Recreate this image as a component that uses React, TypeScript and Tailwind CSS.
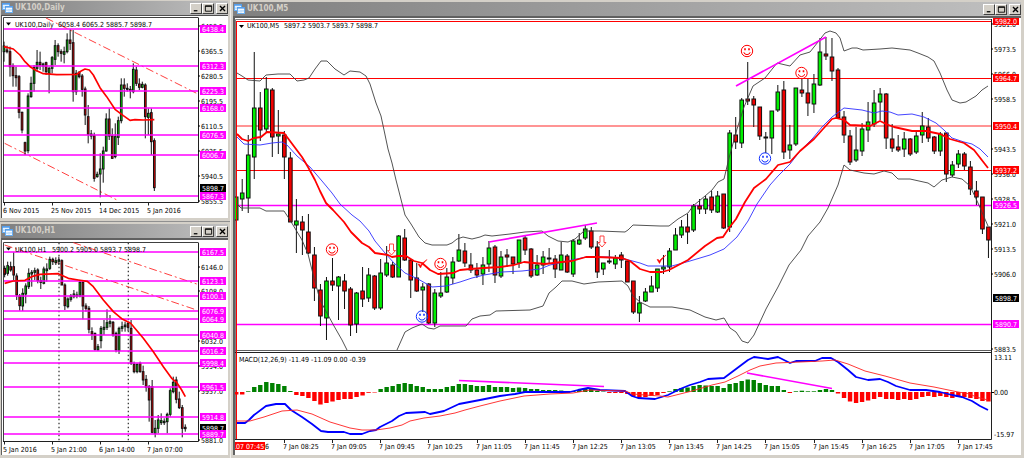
import { ReactNode } from "react";

type Candle = [high: number, top: number, bottom: number, low: number, side: "g" | "r"];
type Level = [value: string, y: number, line?: string];
type Point = [x: number, y: number];

const MAGENTA = "#ff00ff";
const RED = "#ff0000";
const PALE_RED = "#ff9494";

const CHART_FONT = "font-['DejaVu_Sans_Condensed','DejaVu_Sans',sans-serif] text-[7px]";

// [high, body top, body bottom, low, side]
const M5_CANDLES: Candle[] = [
  [197, 197, 220, 220, "g"], [179, 193, 199, 211, "g"], [135, 155, 198, 213, "g"], [52, 108, 157, 179, "g"],
  [92, 108, 130, 141, "r"], [77, 89, 129, 132, "g"], [88, 90, 137, 157, "r"], [110, 134, 136, 154, "g"],
  [131, 135, 157, 179, "r"], [152, 158, 222, 222, "r"], [199, 221, 225, 253, "g"], [216, 222, 230, 255, "r"],
  [214, 232, 253, 254, "r"], [247, 255, 288, 301, "r"], [284, 290, 316, 326, "r"], [277, 281, 318, 340, "g"],
  [258, 281, 285, 291, "r"], [276, 277, 286, 320, "g"], [274, 281, 291, 309, "r"], [287, 289, 325, 336, "r"],
  [292, 293, 324, 333, "g"], [267, 291, 299, 307, "r"], [268, 275, 298, 302, "g"], [275, 276, 308, 310, "r"],
  [259, 273, 308, 310, "g"], [246, 263, 275, 277, "g"], [262, 265, 277, 278, "r"], [235, 236, 277, 277, "g"],
  [229, 238, 260, 261, "r"], [259, 260, 280, 298, "r"], [263, 278, 291, 292, "r"], [283, 287, 290, 312, "g"],
  [283, 284, 323, 324, "r"], [289, 293, 323, 327, "g"], [272, 293, 296, 298, "g"], [268, 277, 292, 293, "g"],
  [257, 262, 278, 284, "g"], [234, 250, 261, 262, "g"], [243, 251, 263, 267, "r"], [253, 265, 270, 273, "r"],
  [263, 270, 275, 278, "r"], [257, 265, 274, 285, "g"], [241, 248, 264, 272, "g"], [245, 247, 275, 283, "r"],
  [251, 257, 276, 278, "g"], [249, 255, 257, 267, "r"], [257, 257, 264, 274, "r"], [240, 240, 263, 268, "g"],
  [236, 238, 250, 255, "r"], [248, 249, 276, 278, "r"], [255, 265, 275, 276, "g"], [251, 257, 265, 274, "g"],
  [248, 258, 259, 263, "g"], [255, 259, 269, 278, "r"], [242, 255, 270, 270, "g"], [254, 256, 272, 273, "r"],
  [239, 241, 274, 277, "g"], [233, 240, 244, 245, "g"], [225, 229, 238, 240, "g"], [227, 231, 247, 249, "r"],
  [241, 247, 272, 278, "r"], [263, 263, 269, 275, "g"], [250, 261, 262, 264, "g"], [255, 258, 264, 269, "g"],
  [252, 255, 260, 268, "r"], [261, 261, 282, 282, "r"], [281, 281, 312, 314, "r"], [296, 303, 313, 322, "g"],
  [288, 292, 301, 302, "g"], [276, 286, 292, 292, "g"], [269, 269, 288, 292, "g"], [255, 267, 269, 274, "g"],
  [248, 251, 267, 272, "g"], [228, 235, 250, 250, "g"], [220, 227, 235, 238, "g"], [214, 227, 232, 244, "r"],
  [204, 206, 230, 232, "g"], [199, 206, 209, 214, "r"], [196, 199, 209, 214, "g"], [191, 197, 210, 213, "r"],
  [191, 196, 212, 213, "g"], [194, 194, 228, 229, "r"], [130, 133, 227, 232, "g"], [117, 135, 142, 149, "r"],
  [98, 100, 143, 148, "g"], [62, 99, 101, 105, "r"], [96, 99, 105, 127, "r"], [107, 107, 136, 140, "r"],
  [132, 137, 138, 153, "g"], [111, 111, 138, 154, "g"], [85, 92, 110, 112, "g"], [81, 90, 152, 159, "r"],
  [125, 145, 150, 159, "g"], [88, 88, 144, 146, "g"], [79, 90, 93, 97, "r"], [79, 93, 103, 116, "r"],
  [74, 84, 104, 113, "g"], [38, 52, 85, 86, "g"], [37, 54, 56, 60, "r"], [38, 57, 71, 81, "r"],
  [68, 70, 118, 119, "r"], [111, 117, 135, 143, "r"], [130, 136, 162, 165, "r"], [127, 150, 160, 162, "g"],
  [123, 129, 151, 156, "g"], [102, 122, 130, 142, "g"], [90, 103, 124, 127, "g"], [88, 94, 102, 120, "g"],
  [93, 94, 138, 149, "r"], [124, 139, 148, 152, "r"], [135, 147, 150, 152, "r"], [132, 139, 149, 157, "g"],
  [138, 139, 154, 156, "r"], [130, 136, 152, 154, "g"], [112, 126, 135, 143, "g"], [118, 127, 138, 142, "r"],
  [136, 137, 151, 154, "r"], [132, 134, 151, 156, "g"], [133, 133, 174, 182, "r"], [161, 165, 175, 177, "g"],
  [150, 154, 164, 168, "g"], [152, 154, 166, 170, "r"], [161, 167, 189, 195, "r"], [181, 191, 197, 205, "r"],
  [197, 197, 229, 234, "r"], [227, 227, 240, 258, "r"],
];

const M5_UPPER: Point[] = [
  [237, 73], [242, 76], [248, 80], [260, 81], [266, 75], [278, 74], [290, 74], [297, 81], [304, 80], [309, 78],
  [315, 69], [321, 61], [327, 61], [335, 69], [344, 75], [350, 71], [360, 72], [366, 76], [370, 84], [376, 103],
  [381, 116], [384, 130], [388, 149], [392, 163], [396, 180], [405, 215], [411, 224], [419, 237], [425, 243],
  [432, 245], [447, 245], [452, 243], [457, 239], [463, 237], [472, 239], [480, 237], [485, 235], [492, 236],
  [510, 234], [525, 232], [542, 231], [548, 236], [558, 241], [568, 242], [575, 239], [584, 231], [600, 231],
  [625, 232], [628, 230], [633, 225], [660, 226], [669, 226], [678, 219], [688, 213], [693, 206], [705, 196],
  [712, 190], [718, 182], [724, 179], [729, 158], [737, 129], [744, 107], [753, 86], [765, 78], [777, 63],
  [790, 66], [800, 55], [810, 52], [818, 42], [825, 33], [830, 31], [836, 33], [840, 38], [844, 51], [852, 48],
  [857, 48], [863, 50], [880, 49], [892, 48], [910, 50], [918, 53], [928, 57], [934, 61], [940, 73], [947, 90],
  [952, 100], [960, 103], [966, 102], [976, 96], [982, 90], [988, 86],
];

const M5_LOWER: Point[] = [
  [236, 203], [241, 208], [260, 208], [266, 211], [284, 211], [290, 220], [296, 230], [302, 240], [308, 254],
  [314, 278], [320, 300], [328, 315], [334, 326], [342, 340], [347, 350],
];

const M5_LOWER_TAIL: Point[] = [
  [397, 350], [405, 332], [412, 328], [422, 324], [428, 328], [434, 329], [440, 326], [466, 326], [472, 319],
  [480, 316], [490, 315], [496, 311], [530, 310], [543, 306], [549, 293], [556, 287], [562, 281], [572, 281],
  [584, 284], [598, 282], [622, 281], [628, 286], [633, 296], [640, 302], [650, 307], [672, 307], [690, 310],
  [705, 317], [716, 320], [724, 318], [730, 328], [736, 332], [742, 341], [748, 343], [754, 335], [766, 309],
  [778, 287], [789, 265], [801, 250], [808, 236], [820, 222], [828, 208], [838, 185], [844, 165], [850, 170],
  [864, 173], [874, 174], [884, 171], [892, 173], [898, 179], [910, 179], [928, 183], [934, 187], [942, 180],
  [952, 177], [962, 179], [970, 186], [978, 203], [988, 226],
];

const M5_FAST: Point[] = [
  [237, 134], [242, 139], [248, 141], [254, 138], [261, 137], [267, 132], [284, 133], [290, 141], [302, 157],
  [308, 167], [315, 180], [320, 191], [326, 203], [333, 210], [344, 222], [351, 232], [362, 243], [369, 247],
  [375, 253], [388, 255], [392, 257], [398, 256], [406, 256], [414, 261], [422, 263], [430, 270], [438, 274],
  [453, 273], [460, 270], [470, 269], [484, 268], [500, 267], [514, 265], [524, 262], [534, 263], [545, 264],
  [562, 262], [572, 261], [586, 257], [597, 257], [622, 258], [630, 261], [640, 269], [650, 272], [662, 272],
  [669, 270], [688, 260], [705, 246], [717, 238], [723, 237], [729, 228], [736, 219], [745, 202], [754, 188],
  [766, 179], [778, 165], [790, 162], [800, 151], [814, 139], [832, 119], [836, 118], [844, 120], [850, 125],
  [870, 126], [880, 121], [886, 124], [894, 127], [912, 131], [926, 131], [940, 134], [950, 139], [964, 143],
  [974, 150], [988, 168],
];

const M5_SLOW: Point[] = [
  [237, 137], [244, 144], [260, 145], [272, 143], [282, 142], [287, 145], [297, 156], [310, 167], [322, 181],
  [332, 193], [340, 204], [352, 215], [360, 221], [369, 231], [375, 241], [385, 253], [394, 263], [405, 273],
  [418, 279], [432, 287], [446, 286], [460, 282], [472, 278], [484, 275], [502, 272], [522, 271], [540, 269],
  [550, 265], [572, 260], [586, 257], [610, 257], [625, 259], [640, 263], [648, 266], [672, 266], [690, 261],
  [710, 255], [724, 249], [737, 237], [748, 221], [757, 204], [770, 185], [778, 176], [790, 164], [800, 151],
  [813, 138], [822, 127], [832, 117], [844, 108], [862, 110], [874, 113], [882, 111], [890, 112], [898, 115],
  [912, 114], [924, 117], [936, 123], [944, 130], [952, 138], [964, 142], [972, 144], [980, 149], [988, 157],
];

const M5_TICKS: Level[] = [
  ["5981.0", 24], ["5973.5", 49], ["5966.0", 74], ["5958.5", 99], ["5943.5", 149], ["5936.0", 174],
  ["5928.5", 199], ["5921.0", 224], ["5913.5", 249], ["5906.0", 274], ["5883.5", 349],
];

const M5_LEVELS: Level[] = [
  ["5982.0", 21, RED], ["5964.7", 78, RED], ["5950.4", 126, PALE_RED], ["5937.2", 170, RED],
  ["5926.5", 205, MAGENTA], ["5890.7", 324, MAGENTA],
];

const M5_TIMES = [
  "08:25", "09:05", "09:45", "10:25", "11:05", "11:45", "12:25", "13:05",
  "13:45", "14:25", "15:05", "15:45", "16:25", "17:05", "17:45",
];

const MACD_BARS = [
  -2.5, -2.5, 0.7, 5, 7, 10, 9, 8, 6, 1, -3, -4, -6, -9, -12.5, -11, -9.5, -8, -7, -7, -5, -3.5, -0.8, -0.5, 3,
  5, 6, 8, 9, 8, 6, 5, 3, 3, 3, 5, 6, 8, 8, 7, 6, 6, 7, 5, 5, 5, 4, 4.5, 4, 3, 3, 2, 2, 2, 1.5, 1, 1, 2, 4, 3,
  1, 0.5, -1, -1, -1, -2, -4, -5.5, -5, -4, -3, -1, 0.7, 3, 4, 4.5, 6, 7, 6.5, 6, 6, 4, 8, 9, 11, 12.5, 12, 9,
  7, 6, 6, 2, -1, 0.7, 1.3, 0.7, 0.7, 2, 3, 2, -1.5, -6, -9.5, -11, -10, -8.5, -7, -5, -7, -7, -8, -7, -8, -7,
  -5, -4, -5, -4, -5, -6, -5, -5, -6, -7, -9, -9.5,
];

const MACD_MAIN: Point[] = [
  [236, 423], [245, 423], [249, 420], [254, 415], [266, 406], [276, 404], [285, 404], [291, 410], [302, 417],
  [312, 424], [321, 431], [328, 432], [344, 432], [350, 434], [362, 434], [370, 431], [376, 430], [380, 427],
  [392, 421], [399, 416], [406, 413], [425, 412], [430, 414], [444, 411], [459, 404], [480, 400], [500, 396],
  [515, 394], [525, 392], [540, 392], [570, 392], [578, 390], [588, 388], [600, 390], [625, 391], [632, 396],
  [638, 398], [655, 399], [668, 395], [672, 393], [680, 389], [690, 385], [700, 382], [708, 379], [724, 378],
  [732, 372], [740, 366], [748, 360], [754, 357], [768, 359], [778, 357], [784, 360], [790, 363], [796, 361],
  [815, 361], [822, 358], [831, 358], [838, 362], [848, 370], [856, 377], [868, 380], [880, 379], [888, 382],
  [896, 386], [910, 390], [926, 390], [940, 392], [952, 395], [962, 397], [972, 401], [980, 406], [988, 410],
];

const MACD_SIGNAL: Point[] = [
  [236, 421], [250, 421], [264, 417], [282, 411], [297, 410], [312, 414], [330, 422], [350, 428], [362, 430],
  [376, 430], [390, 428], [402, 425], [410, 421], [424, 418], [440, 416], [455, 413], [465, 410], [480, 406],
  [500, 401], [524, 396], [550, 394], [573, 393], [590, 390], [625, 391], [633, 394], [645, 395], [660, 396],
  [668, 397], [680, 394], [692, 391], [702, 388], [712, 385], [725, 382], [738, 376], [750, 370], [760, 366],
  [776, 363], [800, 362], [822, 361], [835, 360], [848, 364], [865, 371], [885, 376], [910, 383], [934, 387],
  [958, 392], [970, 394], [976, 397], [988, 400],
];

// the two small charts keep their series in thirds of a pixel
const DAILY_CANDLES: Candle[] = [
  [125, 138, 155, 185, "g"], [137, 150, 155, 160, "r"], [140, 155, 200, 230, "r"], [190, 198, 227, 260, "r"],
  [200, 227, 233, 260, "r"], [225, 230, 337, 355, "r"], [335, 337, 390, 400, "r"], [425, 428, 453, 465, "r"],
  [280, 288, 452, 460, "g"], [230, 250, 290, 293, "g"], [195, 203, 250, 275, "g"], [150, 187, 205, 215, "g"],
  [155, 187, 195, 210, "r"], [188, 192, 198, 215, "g"], [185, 188, 215, 225, "r"], [200, 205, 220, 280, "g"],
  [168, 173, 205, 220, "g"], [120, 137, 178, 195, "g"], [130, 137, 155, 170, "r"], [148, 155, 160, 185, "r"],
  [140, 155, 163, 190, "g"], [100, 120, 155, 160, "g"], [88, 120, 130, 150, "r"], [90, 128, 275, 305, "r"],
  [210, 220, 275, 285, "g"], [213, 217, 230, 235, "r"], [222, 228, 268, 290, "r"], [260, 267, 345, 375, "r"],
  [315, 350, 403, 430, "r"], [390, 402, 408, 418, "r"], [398, 407, 535, 545, "r"], [515, 523, 530, 533, "g"],
  [460, 507, 522, 592, "g"], [440, 453, 507, 548, "g"], [340, 357, 453, 455, "g"], [325, 357, 408, 420, "r"],
  [385, 408, 475, 477, "r"], [370, 410, 470, 475, "g"], [350, 362, 412, 435, "g"], [235, 255, 362, 370, "g"],
  [235, 255, 265, 290, "r"], [250, 265, 268, 275, "g"], [258, 268, 272, 295, "r"], [190, 208, 275, 280, "g"],
  [200, 210, 250, 258, "r"], [235, 252, 262, 270, "r"], [245, 253, 262, 265, "g"], [250, 255, 350, 415, "r"],
  [325, 340, 352, 405, "g"], [325, 338, 425, 465, "r"], [415, 422, 563, 573, "r"],
];

const DAILY_AVERAGE: Point[] = [
  [12, 140], [40, 147], [60, 165], [75, 185], [90, 200], [110, 212], [130, 221], [170, 224], [230, 223],
  [242, 214], [255, 207], [268, 210], [280, 225], [300, 263], [320, 290], [345, 328], [370, 347], [390, 361],
  [405, 359], [430, 360], [463, 359],
];

const DAILY_TICKS: Level[] = [
  ["6450.5", 79], ["6365.5", 154], ["6280.5", 229], ["6195.5", 303], ["6110.5", 378], ["6025.5", 452],
  ["5940.5", 527], ["5855.5", 602],
];

const DAILY_LEVELS: Level[] = [
  ["6438.4", 88], ["6312.3", 198], ["6225.3", 274], ["6168.0", 324], ["6076.5", 405], ["6006.7", 466],
  ["5867.3", 588],
];

const H1_CANDLES: Candle[] = [
  [137, 145, 163, 172, "r"], [125, 137, 160, 167, "g"], [125, 140, 150, 155, "r"], [97, 140, 165, 180, "r"],
  [160, 168, 225, 240, "r"], [222, 228, 257, 272, "r"], [205, 220, 258, 273, "g"], [190, 198, 222, 250, "g"],
  [145, 160, 200, 207, "g"], [150, 157, 162, 200, "g"], [143, 152, 157, 180, "g"], [145, 150, 182, 190, "r"],
  [170, 182, 187, 207, "r"], [140, 147, 190, 193, "g"], [130, 147, 152, 185, "g"], [110, 118, 145, 150, "g"],
  [113, 118, 125, 135, "r"], [112, 122, 128, 135, "g"], [110, 120, 124, 135, "g"], [118, 122, 195, 195, "r"],
  [190, 195, 257, 270, "r"], [232, 237, 260, 265, "g"], [222, 228, 238, 245, "g"], [210, 222, 230, 235, "g"],
  [215, 225, 228, 235, "g"], [180, 187, 228, 232, "g"], [180, 187, 258, 298, "r"], [250, 258, 265, 275, "r"],
  [258, 265, 328, 340, "r"], [322, 335, 343, 360, "r"], [338, 340, 388, 392, "r"], [372, 380, 390, 392, "g"],
  [318, 325, 362, 385, "g"], [300, 322, 328, 345, "g"], [268, 308, 322, 330, "g"], [285, 305, 310, 322, "g"],
  [303, 307, 345, 350, "r"], [335, 340, 390, 397, "r"], [320, 325, 392, 402, "g"], [305, 320, 325, 335, "g"],
  [305, 315, 320, 335, "g"], [305, 310, 322, 333, "r"], [300, 325, 430, 435, "r"], [425, 432, 455, 460, "r"],
  [430, 433, 455, 460, "g"], [425, 430, 455, 458, "r"], [437, 455, 480, 495, "r"], [465, 478, 502, 515, "r"],
  [495, 500, 540, 605, "r"], [480, 500, 637, 640, "r"], [600, 625, 640, 652, "g"], [585, 600, 625, 640, "g"],
  [580, 602, 608, 615, "g"], [595, 604, 608, 615, "g"], [578, 583, 605, 640, "g"], [505, 512, 583, 590, "g"],
  [470, 487, 515, 520, "g"], [470, 480, 538, 550, "r"], [515, 537, 563, 567, "r"], [555, 563, 625, 652, "r"],
  [613, 622, 626, 635, "r"],
];

const H1_AVERAGE: Point[] = [
  [14, 190], [40, 183], [75, 181], [95, 170], [120, 163], [175, 161], [205, 175], [235, 180], [262, 184],
  [280, 200], [310, 240], [340, 275], [365, 296], [392, 310], [430, 355], [460, 395], [490, 440], [515, 475],
  [530, 487], [545, 510], [556, 530],
];

const H1_TICKS: Level[] = [
  ["6146.0", 140], ["6108.0", 213], ["6032.0", 363], ["5994.0", 438], ["5957.0", 512], ["5881.0", 660],
];

const H1_LEVELS: Level[] = [
  ["6167.5", 96], ["6123.1", 184], ["6100.1", 229], ["6076.9", 273], ["6064.9", 298], ["6040.8", 346],
  ["6016.2", 393], ["5998.4", 430], ["5961.5", 502], ["5914.8", 592], ["5889.7", 641],
];

const m5x = (index: number) => 236.2 + index * 6.018

const toPoints = (points: Point[]) => points.map(p => p.join(",")).join(" ")

const Line = ({ points, color, width = 1 }: { points: Point[]; color: string; width?: number }) => (
  <polyline points={toPoints(points)} fill="none" stroke={color} strokeWidth={width} strokeLinejoin="round" />
)

const Candles = ({ data, x, size, weight }: {
  data: Candle[];
  x: (index: number) => number;
  size: number;
  weight: number;
}) => (
  <g stroke="#101010" strokeWidth={weight}>
    {data.map(([high, top, bottom, low, side], i) => (
      <g key={i}>
        <line x1={x(i)} x2={x(i)} y1={high} y2={low} />
        <rect
          x={x(i) - size / 2}
          y={top}
          width={size}
          height={Math.max(bottom - top, weight / 2)}
          fill={side === "g" ? "#00f000" : "#f00000"}
        />
      </g>
    ))}
  </g>
)

const PriceTag = ({ x, y, value, color }: { x: number; y: number; value: string; color: string }) => (
  <g>
    <rect x={x} y={y - 4} width="26" height="8" fill={color} />
    <text x={x + 2} y={y + 3} fill="#fff">{value}</text>
  </g>
)

const PriceTick = ({ x, y, value }: { x: number; y: number; value: string }) => (
  <g>
    <path d={`M${x - 2} ${y}h2`} stroke="#000" />
    <text x={x + 1} y={y + 3}>{value}</text>
  </g>
)

const Smile = ({ x, y, color }: { x: number; y: number; color: string }) => (
  <g transform={`translate(${x} ${y})`} fill="none" stroke={color}>
    <circle r="5.7" />
    <path d="M-3.2 1.2Q-2.6 3.6 0 3.6T3.2 1.2" />
    <path d="M-2 -2.8v2M2 -2.8v2" strokeWidth="1.6" />
  </g>
)

const ArrowDown = ({ x, y }: { x: number; y: number }) => (
  <path
    d="M-2 -5.5H2V1H4L0 5.5L-4 1H-2Z"
    transform={`translate(${x} ${y})`}
    fill="#fff"
    stroke="#ff3030"
    strokeWidth="0.9"
  />
)

const Check = ({ x, y }: { x: number; y: number }) => (
  <path
    d="M-4 0L-1.5 4L0 1L5 -4.5L0 -0.6L-1.8 1.6L-2.6 0Z"
    transform={`translate(${x} ${y})`}
    fill={RED}
    stroke={RED}
    strokeWidth="0.5"
  />
)

const Caret = ({ x, y }: { x: number; y: number }) => <path d={`M${x} ${y}h5l-2.5 3z`} fill="#000" />

const ChartIcon = () => (
  <svg viewBox="0 0 11 10" className="w-[11px] h-[10px] shrink-0" aria-hidden="true">
    <rect x="0.5" y="0.5" width="7" height="6" fill="#e4f2ff" stroke="#6aaef0" />
    <path d="M0 1h8" stroke="#4a96e8" strokeWidth="1.4" />
    <path d="M2 5V3.4M4 4.6V3" stroke="#7ab8f4" strokeWidth="0.8" />
    <rect x="3.5" y="3.5" width="7" height="6" fill="#f4faff" stroke="#6aaef0" />
    <path d="M3 4h8" stroke="#4a96e8" strokeWidth="1.2" />
    <path d="M5 8V6.4M7 8.4V6M9 7.8V6" stroke="#7ab8f4" strokeWidth="0.8" />
  </svg>
)

const CAPTION_ICONS: Record<string, ReactNode> = {
  Minimize: <path d="M2 7.5h4" stroke="#000" strokeWidth="1.4" />,
  Maximize: <path d="M1.5 2H8.5V8H1.5ZM1.5 2.6h7" fill="none" stroke="#000" />,
  Close: <path d="M2.2 2.2l5.6 5.6M7.8 2.2L2.2 7.8" stroke="#000" strokeWidth="1.5" />,
}

const CaptionButton = ({ name }: { name: string }) => (
  <button
    type="button"
    aria-label={name}
    className="flex h-[11px] w-[12px] items-center justify-center border border-t-white border-l-white border-r-[#404040] border-b-[#404040] bg-[#d4d0c8]"
  >
    <svg viewBox="0 0 10 10" className="size-[9px] shrink-0">{CAPTION_ICONS[name]}</svg>
  </button>
)

const ChartWindow = ({ title, children }: { title: string; children: ReactNode }) => (
  <>
    <header className="flex h-[14px] items-center bg-linear-to-r from-[#808080] to-[#c0c0c0] pl-px">
      <ChartIcon />
      <h2 className="flex-1 pl-[2px] font-['DejaVu_Sans_Condensed','DejaVu_Sans',sans-serif] text-[8px] leading-[12px] font-bold text-[#d4d0c8]">
        {title}
      </h2>
      <CaptionButton name="Minimize" />
      <CaptionButton name="Maximize" />
      <div className="pl-[2px]">
        <CaptionButton name="Close" />
      </div>
    </header>
    {children}
  </>
)

const SmallChart = ({ top, bottom, frame, levels, ticks, last, candles, pitch, average, dashes, header, times, separators = [] }: {
  top: number;
  bottom: number;
  frame: [top: number, bottom: number];
  levels: Level[];
  ticks: Level[];
  last: number;
  candles: Candle[];
  pitch: [start: number, step: number];
  average: Point[];
  dashes: string;
  header: [symbol: string, prices: string, pricesX: number];
  times: string[];
  separators?: number[];
}) => {
  const base = top < 200 ? 0 : 220
  const y = (value: number) => Math.round(base + value / 3)
  const [frameTop, frameBottom] = frame

  return (
    <svg viewBox={`2 ${top} 226 ${bottom - top}`} className={`block h-auto w-full bg-white ${CHART_FONT}`}>
      <path d={`M3.5 ${frameBottom}V${frameTop}H198`} fill="none" stroke="#404040" />
      <g transform={`translate(0 ${base}) scale(0.33333)`}>
        {separators.map(x => (
          <path key={x} d={`M${x} 68V665`} stroke="#404040" strokeWidth="4" strokeDasharray="5 7" />
        ))}
        <path d={dashes} fill="none" stroke="#ff2020" strokeWidth="2.6" strokeDasharray="24 9 6 9" />
        <Candles data={candles} x={i => pitch[0] + i * pitch[1]} size={5} weight={3} />
      </g>
      {levels.map(([value, at]) => (
        <path key={value} d={`M4 ${y(at)}H198`} stroke={MAGENTA} strokeWidth="1.6" />
      ))}
      <g transform={`translate(0 ${base}) scale(0.33333)`}>
        <Line points={average} color={RED} width={5} />
      </g>
      <path d={`M198.5 ${frameTop}V${frameBottom}H3`} fill="none" stroke="#202020" />
      <Caret x={6} y={frameTop + 5} />
      <text x="15" y={frameTop + 9}>{header[0]}</text>
      <text x={header[2]} y={frameTop + 9}>{header[1]}</text>
      {ticks.map(([value, at]) => <PriceTick key={value} x={200} y={y(at)} value={value} />)}
      <PriceTag x={200} y={y(last)} value="5898.7" color="#000" />
      {levels.map(([value, at]) => <PriceTag key={value} x={200} y={y(at)} value={value} color={MAGENTA} />)}
      {times.map((time, i) => (
        <g key={time}>
          <path d={`M${4.5 + i * 48} ${frameBottom}v3`} stroke="#202020" />
          <text x={3 + i * 48} y={frameBottom + 10}>{time}</text>
        </g>
      ))}
    </svg>
  )
}

const MainChart = () => (
  <svg viewBox="235 18 786 437" className={`block h-auto w-full bg-white ${CHART_FONT}`}>
    <path d="M235.5 439V19.5H992" fill="none" stroke="#808080" />
    {M5_LEVELS.map(([value, y, line]) => (
      <path
        key={value}
        d={`M236 ${line === PALE_RED ? y : y + 0.5}H992`}
        stroke={line}
        strokeWidth={line === PALE_RED ? 2 : line === MAGENTA ? 1.4 : 1}
      />
    ))}
    <Candles data={M5_CANDLES} x={m5x} size={3.6} weight={1} />
    <Line points={M5_UPPER} color="#404040" width={0.9} />
    <Line points={M5_LOWER} color="#404040" width={0.9} />
    <Line points={M5_LOWER_TAIL} color="#404040" width={0.9} />
    <Line points={M5_SLOW} color="#3030ff" width={0.9} />
    <Line points={M5_FAST} color={RED} width={1.8} />
    <path d="M489 242L597 223M736 86L826 37" stroke={MAGENTA} strokeWidth="1.7" />
    <Smile x={332} y={249.5} color={RED} />
    <Smile x={440.5} y={264} color={RED} />
    <Smile x={747} y={51} color={RED} />
    <Smile x={801.5} y={73} color={RED} />
    <Smile x={422} y={316.5} color="#1030ff" />
    <Smile x={765} y={158.5} color="#1030ff" />
    <ArrowDown x={391.5} y={249.5} />
    <ArrowDown x={602} y={241.5} />
    <Check x={422} y={264} />
    <Check x={661} y={259.5} />
    <path d="M235 350.5H992" stroke="#606060" />
    <path d="M235 352.5H992M991.5 19V439.5H235" fill="none" stroke="#202020" />

    {MACD_BARS.map((value, i) => (
      <rect
        key={i}
        x={m5x(i) - 2.2}
        y={value > 0 ? 392 - value : 392}
        width="4.4"
        height={Math.abs(value)}
        fill={value > 0 ? "#008000" : RED}
      />
    ))}
    <Line points={MACD_MAIN} color="#0000ff" width={1.8} />
    <Line points={MACD_SIGNAL} color="#ff2020" width={0.9} />
    <path d="M459 380.5L604 386.5M747 373L832 388.5" stroke={MAGENTA} strokeWidth="1.6" />
    <path d="M236.5 21V439" stroke={RED} />

    <Caret x={239} y={25} />
    <text x="247" y="28">UK100,M5</text>
    <text x="284" y="28">5897.2 5903.7 5893.7 5898.7</text>
    <text x="239" y="362">MACD(12,26,9) -11.49 -11.09 0.00 -0.39</text>

    {M5_TICKS.map(([value, y]) => <PriceTick key={value} x={993} y={y} value={value} />)}
    {M5_LEVELS.map(([value, y, line]) => (
      <PriceTag key={value} x={993} y={y} value={value} color={line === MAGENTA ? MAGENTA : RED} />
    ))}
    <PriceTag x={993} y={298} value="5898.7" color="#000" />
    <text x="994" y="360">13.11</text>
    <path d="M991 392.5h3" stroke="#000" />
    <text x="994" y="395">0.00</text>
    <text x="994" y="437">-15.97</text>

    {M5_TIMES.map((time, i) => (
      <g key={time}>
        <path d={`M${284.5 + Math.round(i * 48.14)} 440v3`} stroke="#202020" />
        <text x={283 + Math.round(i * 48.14)} y="449">7 Jan {time}</text>
      </g>
    ))}
    <rect x="235" y="442" width="30" height="8" fill={RED} />
    <text x="234" y="449" fill="#fff">.07 07:45</text>
    <text x="265" y="449">6</text>
  </svg>
)

export default function App() {
  return (
    <main className="grid grid-cols-[231fr_793fr] bg-[#d4d0c8]">
      <div className="flex flex-col border-r border-[#f0eeea]">
        <section className="border-b border-[#d4d0c8] pt-px pr-[2px] pb-[2px] pl-px">
          <ChartWindow title="UK100,Daily">
            <div className="border-t border-l border-[#505050]">
              <SmallChart
                top={16}
                bottom={218}
                frame={[17.5, 202.5]}
                levels={DAILY_LEVELS}
                ticks={DAILY_TICKS}
                last={564}
                candles={DAILY_CANDLES}
                pitch={[12, 9.02]}
                average={DAILY_AVERAGE}
                dashes="M138 54L590 280M14 430L355 602"
                header={["UK100,Daily", "6058.4 6065.2 5885.7 5898.7", 58]}
                times={["6 Nov 2015", "25 Nov 2015", "14 Dec 2015", "5 Jan 2016"]}
              />
            </div>
          </ChartWindow>
        </section>
        <section className="border-t border-[#909090] pt-[2px] pr-[2px] pb-[3px] pl-px">
          <ChartWindow title="UK100,H1">
            <div className="border-t-2 border-l border-[#606060]">
              <SmallChart
                top={240}
                bottom={455}
                frame={[242.5, 441.5]}
                levels={H1_LEVELS}
                ticks={H1_TICKS}
                last={623}
                candles={H1_CANDLES}
                pitch={[14, 9.03]}
                average={H1_AVERAGE}
                dashes="M14 75L590 270M220 68L590 192"
                header={["UK100,H1", "5900.2 5905.0 5893.7 5898.7", 52]}
                times={["5 Jan 2016", "5 Jan 21:00", "6 Jan 14:00", "7 Jan 07:00"]}
                separators={[177, 385]}
              />
            </div>
          </ChartWindow>
        </section>
      </div>
      <section className="pt-[2px] pr-[3px] pb-[3px] pl-[2px]">
        <ChartWindow title="UK100,M5">
          <div className="border-t-2 border-l-2 border-[#606060]">
            <MainChart />
          </div>
        </ChartWindow>
      </section>
    </main>
  )
}
